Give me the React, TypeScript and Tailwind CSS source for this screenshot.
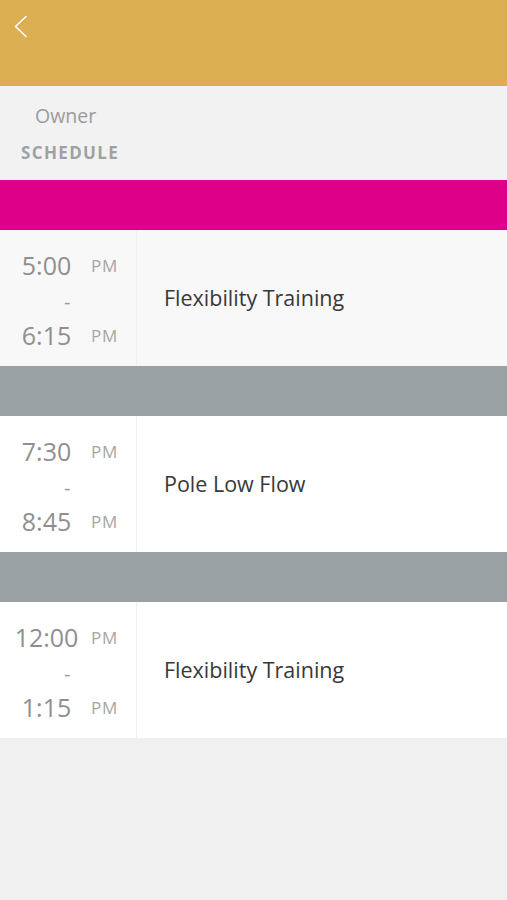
const sessions = [
  { start: "5:00", end: "6:15", title: "Flexibility Training", bar: "bg-[#de0088]", row: "bg-[#f8f8f8]" },
  { start: "7:30", end: "8:45", title: "Pole Low Flow", bar: "bg-[#99a1a3]", row: "bg-white" },
  { start: "12:00", end: "1:15", title: "Flexibility Training", bar: "bg-[#99a1a3]", row: "bg-white" },
];

function TimeLine({ time }: { time: string }) {
  return (
    <div className="flex h-[35px] items-center">
      <span className="-mr-[2px] w-[93px] text-center text-[25px] leading-none text-[#8f8f8f]">{time}</span>
      <span className="text-[17px] leading-none tracking-[0.05em] text-[#a6a6a6]">PM</span>
    </div>
  );
}

export default function App() {
  return (
    <div
      className="min-h-[900px] w-full bg-[#f0f0f0]"
      style={{ fontFamily: '"Open Sans", "Noto Sans", sans-serif' }}
    >
      {/* Header */}
      <header className="h-[86px] bg-[#dbae51] pl-[13px] pt-[15px]">
        <svg width="15" height="23" viewBox="0 0 15 23" fill="none">
          <path d="M13 1.5 L2.5 11.5 L13 21.5" stroke="white" strokeWidth="1.6" strokeLinecap="round" strokeLinejoin="round" />
        </svg>
      </header>

      <div className="h-[94px] bg-[#f2f2f2] px-[21px] pt-[17px]">
        <p className="pl-[14px] text-[19.5px] leading-[26px] text-[#9b9b9b]">Owner</p>
        <p className="mt-[12px] text-[17px] font-bold leading-[24px] tracking-[0.08em] text-[#9ea2a5]">
          SCHEDULE
        </p>
      </div>

      {sessions.map((s, i) => (
        <div key={i}>
          <div className={`h-[50px] ${s.bar}`} />
          <div className={`flex h-[136px] ${s.row}`}>
            <div className="flex w-[137px] flex-col justify-center border-r border-[#f0f0f0] pt-[5px]">
              <TimeLine time={s.start} />
              <div className="h-[35px] pl-[64px] text-[20px] leading-[38px] text-[#9a9a9a]">-</div>
              <TimeLine time={s.end} />
            </div>
            <div className="flex items-center pl-[27px] text-[21.5px] text-[#383838]">{s.title}</div>
          </div>
        </div>
      ))}
    </div>
  );
}
